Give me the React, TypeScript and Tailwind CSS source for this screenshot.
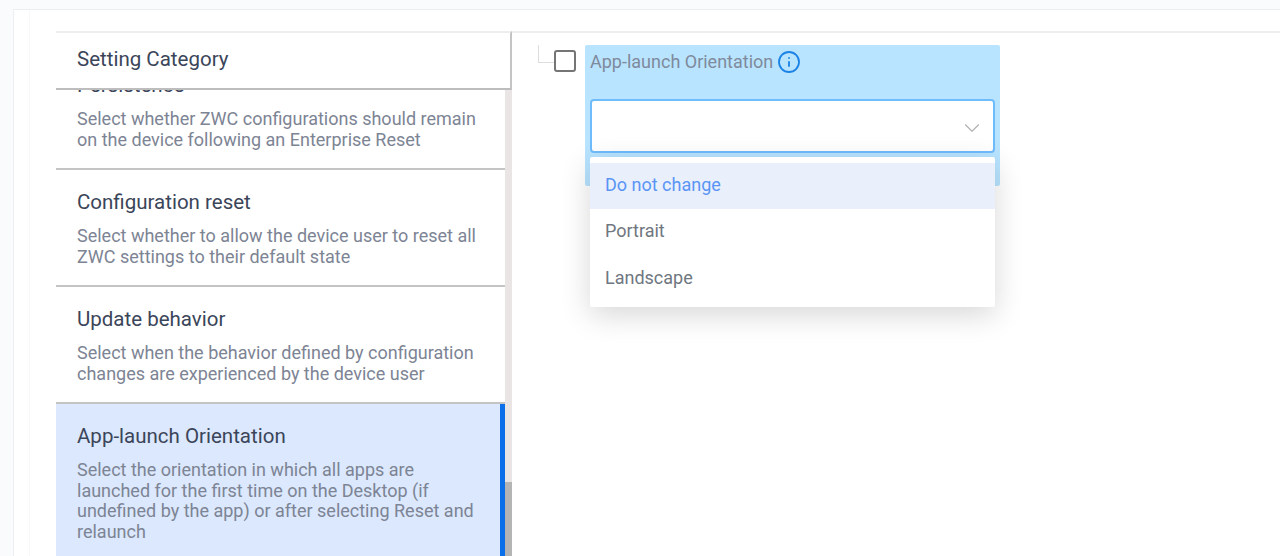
import { ChevronDown, Info } from "lucide-react";

const items = [
  {
    title: "Persistence",
    desc: "Select whether ZWC configurations should remain on the device following an Enterprise Reset",
  },
  {
    title: "Configuration reset",
    desc: "Select whether to allow the device user to reset all ZWC settings to their default state",
  },
  {
    title: "Update behavior",
    desc: "Select when the behavior defined by configuration changes are experienced by the device user",
  },
];

const App = () => {
  return (
    <div className="h-[556px] w-[1280px] overflow-hidden bg-[#fafbfd] pt-[9px] pl-[13px] font-['Roboto',sans-serif]">
      <div className="h-[600px] border-t border-l border-[#eceef2] bg-white pl-[15px]">
        <div className="h-full border-l border-[#f7f8fa] pt-[21px] pl-[26px]">
          <div className="flex items-start">
            {/* Category list */}
            <div className="flex h-[526px] w-[456px] shrink-0 flex-col">
              <div className="z-10 flex h-[59px] shrink-0 items-center border-t-2 border-r-2 border-b-2 border-t-[#eeeeee] border-r-[#c4c4c4] border-b-[#bdbdbd] bg-white pb-[2px] pl-[21px] text-[20.5px] text-[#3b4559]">
                Setting Category
              </div>
              <div className="flex min-h-0 flex-1 overflow-hidden">
                <div className="-mt-[37px] w-[449px] shrink-0">
                  {items.map((item) => (
                    <div
                      key={item.title}
                      className="h-[117px] border-b-2 border-[#c4c4c4] pt-[20px] pl-[21px]"
                    >
                      <div className="text-[20.5px] leading-[24px] text-[#3b4559]">{item.title}</div>
                      <p className="mt-[11px] w-[410px] text-[18px] leading-[21px] text-[#7d8494]">
                        {item.desc}
                      </p>
                    </div>
                  ))}
                  <div className="h-[170px] border-r-[5px] border-[#0a6fe8] bg-[#dbe8fd] pt-[20px] pl-[21px]">
                    <div className="text-[20.5px] leading-[24px] text-[#3b4559]">App-launch Orientation</div>
                    <p className="mt-[12px] w-[400px] text-[18px] leading-[20.7px] text-[#7d8494]">
                      Select the orientation in which all apps are launched for the first time on the Desktop (if
                      undefined by the app) or after selecting Reset and relaunch
                    </p>
                  </div>
                </div>
                {/* Scrollbar */}
                <div className="flex w-[7px] shrink-0 flex-col bg-[#e9e5e5]">
                  <div className="h-[392px] shrink-0" />
                  <div className="flex-1 bg-[#b4b4b4]" />
                </div>
              </div>
            </div>

            {/* Setting detail */}
            <div className="h-[500px] flex-1 border-t-2 border-[#eeeeee] pt-[12px] pl-[26px]">
              <div className="flex items-start">
                <div className="h-[18px] w-[16px] shrink-0 border-b border-l border-[#dddddd]" />
                <div className="mt-[5px] h-[22px] w-[22px] shrink-0 rounded-[3px] border-2 border-[#757575] bg-white" />
                <div className="relative ml-[9px] h-[141px] w-[415px] rounded-[2px] bg-[#b8e4ff] px-[5px] pt-[5px]">
                  <div className="flex h-[24px] items-center gap-[4px] text-[18px] leading-[24px] text-[#7f8a9c]">
                    App-launch Orientation
                    <Info size={24} strokeWidth={1.8} className="text-[#1b82e6]" />
                  </div>
                  <div className="mt-[25px] flex h-[54px] items-center justify-end rounded-[4px] border-2 border-[#6fbcfc] bg-white pt-[3px] pr-[8px]">
                    <ChevronDown size={26} strokeWidth={1} className="text-[#b0b0b0]" />
                  </div>
                  {/* Dropdown menu */}
                  <div className="absolute top-[112px] left-[5px] w-[405px] rounded-[2px] bg-white py-[6px] text-[18px] shadow-[0_8px_30px_rgba(0,0,0,0.16)]">
                    <div className="flex h-[46px] items-center bg-[#e9f0fc] pb-[3px] pl-[15px] text-[#5a95f5]">
                      Do not change
                    </div>
                    <div className="flex h-[46px] items-center pb-[3px] pl-[15px] text-[#6f7780]">Portrait</div>
                    <div className="flex h-[46px] items-center pb-[1px] pl-[15px] text-[#6f7780]">Landscape</div>
                  </div>
                </div>
              </div>
            </div>
          </div>
        </div>
      </div>
    </div>
  );
};

export default App;
